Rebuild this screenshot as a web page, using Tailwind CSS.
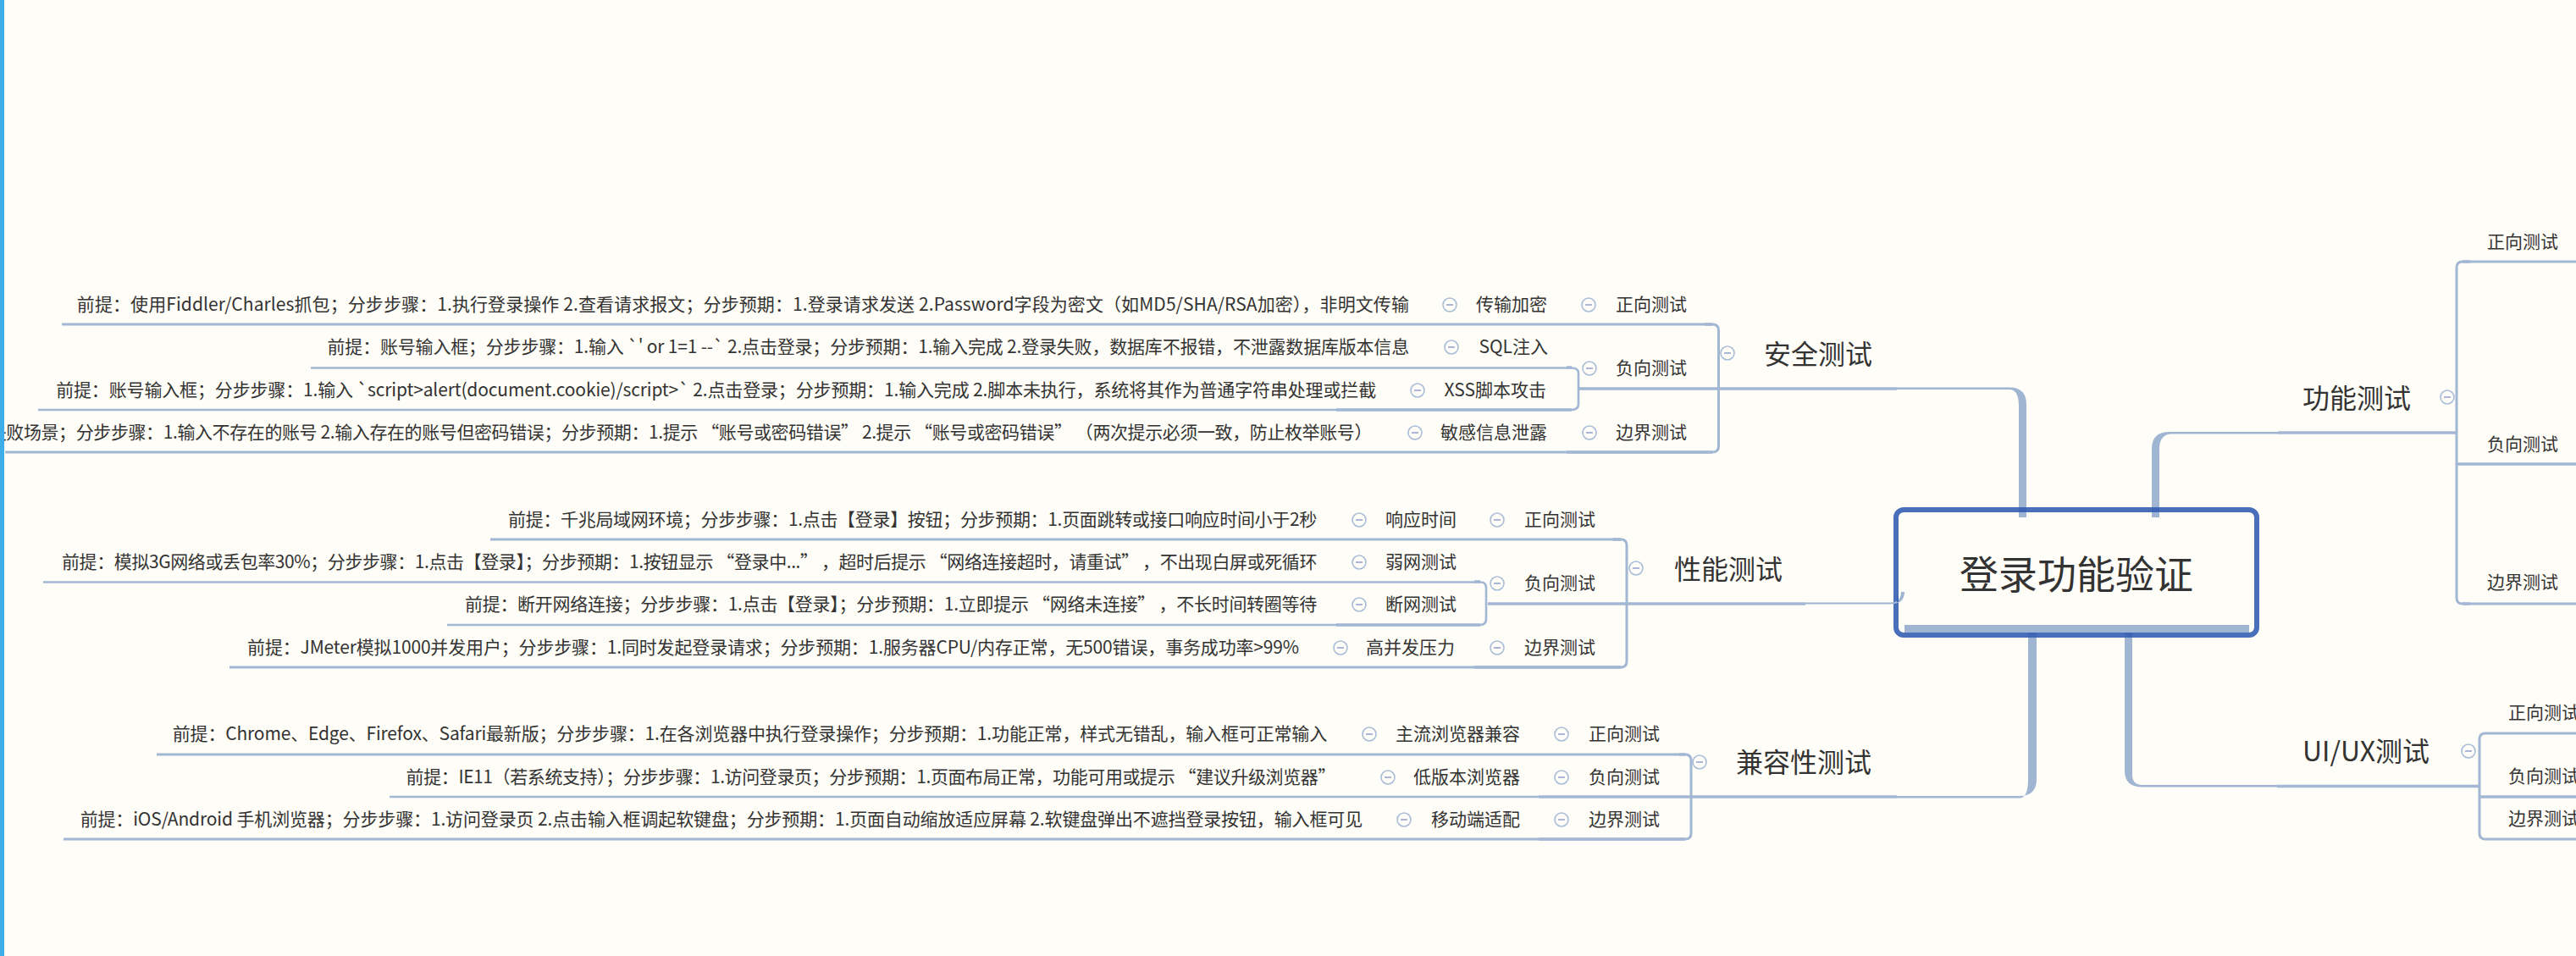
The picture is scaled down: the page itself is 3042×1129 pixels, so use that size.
<!DOCTYPE html>
<html lang="zh-CN">
<head>
    <meta charset="UTF-8">
    <title>登录功能验证</title>
    <script src="https://cdn.jsdelivr.net/npm/@tailwindcss/browser@4"></script>
</head>
<body class="bg-[#fffdf7]">
    <!-- mind map canvas: nodes sit at their diagram coordinates -->
    <div class="relative w-[3042px] h-[1129px] overflow-hidden bg-[#fffdf7] text-[#333] text-[21px] leading-[25px] whitespace-nowrap font-['Noto_Sans_CJK_SC','Liberation_Sans',sans-serif]">

        <!-- root topic -->
        <div class="absolute left-[2236px] top-[599px] w-[432px] h-[154px] border-[6px] border-[#4a6fba] rounded-[12px] flex items-center justify-center pb-[2px]">
            <span class="text-[46px] leading-[60px]">登录功能验证</span>
        </div>

        <svg class="absolute inset-0" width="3042" height="1129" fill="none" stroke="#a2b7d3" stroke-width="3">
            <defs>
                <g id="fold">
                    <circle r="8" fill="#fffdf7" stroke="#a9bdd9" stroke-width="1.6"></circle>
                    <path d="M-4 0H4" stroke="#a4aed4" stroke-width="1.8"></path>
                </g>
            </defs>

            <!-- hub bar and branches -->
            <g fill="#9fb5d1" stroke="none">
                <rect x="2249" y="738" width="407" height="9"></rect>
                <path d="M2240 457.5H2373Q2393 457.5 2393 478V611H2384V480Q2384 460 2373 460H2240Z"></path>
                <rect x="2541" y="530" width="9" height="81"></rect>
                <path d="M2541 530Q2541 510 2562 510H2690V512.5H2565Q2550 512.5 2550 530Z"></path>
                <path d="M2132 711.5H2232Q2245 711.5 2245 699H2249Q2249 713.5 2232 713.5H2132Z"></path>
                <path d="M2405 747V920Q2405 940 2385 940H2240V942.5H2385Q2395 942.5 2395 920V747Z"></path>
                <path d="M2518 747V915Q2518 927 2530 927H2689V929.5H2530Q2509 929.5 2509 910V747Z"></path>
            </g>
            <!-- where branches cross the root border -->
            <g fill="#3f65b6" stroke="none">
                <rect x="2384" y="599" width="9" height="6"></rect>
                <rect x="2541" y="599" width="9" height="6"></rect>
                <rect x="2395" y="747" width="10" height="6"></rect>
                <rect x="2509" y="747" width="9" height="6"></rect>
                <rect x="2240" y="703" width="2" height="8"></rect>
            </g>

            <!-- 安全测试 -->
            <path d="M73 383H2022Q2029.5 383 2029.5 390V527Q2029.5 534 2022 534H6"></path>
            <path d="M367 434.5H1856Q1864 434.5 1864 441V477Q1864 484 1856 484H45" stroke-width="2.6"></path>
            <path d="M2013 383H2022M1850 534H2022M1850 434H1856M1578 484H1856" stroke-width="3.6"></path>
            <path d="M1865 459H2240" stroke-width="3.6"></path>

            <!-- 性能测试 -->
            <path d="M579 637H1914Q1921 637 1921 644V781Q1921 788 1914 788H271"></path>
            <path d="M51 687.5H1748Q1755 687.5 1755 694V731Q1755 738 1748 738H528" stroke-width="2.6"></path>
            <path d="M1741 788H1914M1905 637H1914M1578 738H1748M1741 687H1748" stroke-width="3.6"></path>
            <path d="M1757 713H2132" stroke-width="3.6"></path>

            <!-- 兼容性测试 -->
            <path d="M185 891H1990Q1997 891 1997 898V984Q1997 991 1990 991H75"></path>
            <path d="M460 941H1817" stroke-width="2.6"></path>
            <path d="M1983 891H1990M1817 991H1990" stroke-width="3.6"></path>
            <path d="M1817 941H2240" stroke-width="3.6"></path>

            <!-- 功能测试 -->
            <path d="M3042 309H2908Q2901 309 2901 316V706Q2901 713 2908 713H3042"></path>
            <path d="M2690 511H2901M2901 548H3042M2908 309H2917M2908 713H2917" stroke-width="3.6"></path>

            <!-- UI/UX测试 -->
            <path d="M3042 866H2935Q2928 866 2928 873V984Q2928 991 2935 991H3042"></path>
            <path d="M2689 928.5H2928M2928 941H3042" stroke-width="3.6"></path>

            <!-- fold buttons -->
            <use href="#fold" x="1712" y="360"></use>
            <use href="#fold" x="1876" y="360"></use>
            <use href="#fold" x="1714" y="410"></use>
            <use href="#fold" x="1674" y="461"></use>
            <use href="#fold" x="1877" y="435"></use>
            <use href="#fold" x="1671" y="511"></use>
            <use href="#fold" x="1877" y="511"></use>
            <use href="#fold" x="2040" y="417"></use>

            <use href="#fold" x="1605" y="614"></use>
            <use href="#fold" x="1768" y="614"></use>
            <use href="#fold" x="1605" y="664"></use>
            <use href="#fold" x="1605" y="714"></use>
            <use href="#fold" x="1768" y="689"></use>
            <use href="#fold" x="1583" y="765"></use>
            <use href="#fold" x="1768" y="765"></use>
            <use href="#fold" x="1932" y="671"></use>

            <use href="#fold" x="1617" y="867"></use>
            <use href="#fold" x="1844" y="867"></use>
            <use href="#fold" x="1639" y="918"></use>
            <use href="#fold" x="1844" y="918"></use>
            <use href="#fold" x="1658" y="968"></use>
            <use href="#fold" x="1844" y="968"></use>
            <use href="#fold" x="2007" y="900"></use>

            <use href="#fold" x="2890" y="469"></use>
            <use href="#fold" x="2915" y="887"></use>
        </svg>

        <!-- 安全测试 nodes -->
        <div class="absolute right-[1378px] top-[346px] tracking-[0.09px]">前提：使用Fiddler/Charles抓包；分步步骤：1.执行登录操作 2.查看请求报文；分步预期：1.登录请求发送 2.Password字段为密文（如MD5/SHA/RSA加密），非明文传输</div>
        <div class="absolute right-[1215px] top-[346px]">传输加密</div>
        <div class="absolute right-[1050px] top-[346px]">正向测试</div>
        <div class="absolute right-[1378px] top-[396px] tracking-[-0.19px]">前提：账号输入框；分步步骤：1.输入 `' or 1=1 --` 2.点击登录；分步预期：1.输入完成 2.登录失败，数据库不报错，不泄露数据库版本信息</div>
        <div class="absolute right-[1214px] top-[396px]">SQL注入</div>
        <div class="absolute right-[1050px] top-[421px]">负向测试</div>
        <div class="absolute right-[1417px] top-[447px] tracking-[-0.15px]">前提：账号输入框；分步步骤：1.输入 `script&gt;alert(document.cookie)/script&gt;` 2.点击登录；分步预期：1.输入完成 2.脚本未执行，系统将其作为普通字符串处理或拦截</div>
        <div class="absolute right-[1216px] top-[447px]">XSS脚本攻击</div>
        <div class="absolute right-[1422px] top-[497px] tracking-[-0.4px]">前提：登录失败场景；分步步骤：1.输入不存在的账号 2.输入存在的账号但密码错误；分步预期：1.提示 “账号或密码错误” 2.提示 “账号或密码错误” （两次提示必须一致，防止枚举账号）</div>
        <div class="absolute right-[1215px] top-[497px]">敏感信息泄露</div>
        <div class="absolute right-[1050px] top-[497px]">边界测试</div>
        <div class="absolute left-[2083px] top-[396px] text-[32px] leading-[41px]">安全测试</div>

        <!-- 性能测试 nodes -->
        <div class="absolute right-[1487px] top-[600px] tracking-[-0.32px]">前提：千兆局域网环境；分步步骤：1.点击【登录】按钮；分步预期：1.页面跳转或接口响应时间小于2秒</div>
        <div class="absolute right-[1322px] top-[600px]">响应时间</div>
        <div class="absolute right-[1158px] top-[600px]">正向测试</div>
        <div class="absolute right-[1487px] top-[650px] tracking-[-0.41px]">前提：模拟3G网络或丢包率30%；分步步骤：1.点击【登录】；分步预期：1.按钮显示 “登录中...” ，超时后提示 “网络连接超时，请重试” ，不出现白屏或死循环</div>
        <div class="absolute right-[1322px] top-[650px]">弱网测试</div>
        <div class="absolute right-[1158px] top-[675px]">负向测试</div>
        <div class="absolute right-[1487px] top-[700px] tracking-[-0.28px]">前提：断开网络连接；分步步骤：1.点击【登录】；分步预期：1.立即提示 “网络未连接” ，不长时间转圈等待</div>
        <div class="absolute right-[1322px] top-[700px]">断网测试</div>
        <div class="absolute right-[1508px] top-[751px] tracking-[-0.16px]">前提：JMeter模拟1000并发用户；分步步骤：1.同时发起登录请求；分步预期：1.服务器CPU/内存正常，无500错误，事务成功率&gt;99%</div>
        <div class="absolute right-[1324px] top-[751px]">高并发压力</div>
        <div class="absolute right-[1158px] top-[751px]">边界测试</div>
        <div class="absolute left-[1977px] top-[650px] text-[32px] leading-[41px]">性能测试</div>

        <!-- 兼容性测试 nodes -->
        <div class="absolute right-[1475px] top-[853px] tracking-[-0.16px]">前提：Chrome、Edge、Firefox、Safari最新版；分步步骤：1.在各浏览器中执行登录操作；分步预期：1.功能正常，样式无错乱，输入框可正常输入</div>
        <div class="absolute right-[1247px] top-[853px]">主流浏览器兼容</div>
        <div class="absolute right-[1082px] top-[853px]">正向测试</div>
        <div class="absolute right-[1465px] top-[904px] tracking-[-0.4px]">前提：IE11（若系统支持）；分步步骤：1.访问登录页；分步预期：1.页面布局正常，功能可用或提示 “建议升级浏览器”</div>
        <div class="absolute right-[1247px] top-[904px]">低版本浏览器</div>
        <div class="absolute right-[1082px] top-[904px]">负向测试</div>
        <div class="absolute right-[1433px] top-[954px] tracking-[-0.14px]">前提：iOS/Android 手机浏览器；分步步骤：1.访问登录页 2.点击输入框调起软键盘；分步预期：1.页面自动缩放适应屏幕 2.软键盘弹出不遮挡登录按钮，输入框可见</div>
        <div class="absolute right-[1247px] top-[954px]">移动端适配</div>
        <div class="absolute right-[1082px] top-[954px]">边界测试</div>
        <div class="absolute left-[2050px] top-[878px] text-[32px] leading-[41px]">兼容性测试</div>

        <!-- 功能测试 nodes -->
        <div class="absolute left-[2719px] top-[448px] text-[32px] leading-[41px]">功能测试</div>
        <div class="absolute left-[2937px] top-[272px]">正向测试</div>
        <div class="absolute left-[2937px] top-[511px]">负向测试</div>
        <div class="absolute left-[2937px] top-[674px]">边界测试</div>

        <!-- UI/UX测试 nodes -->
        <div class="absolute left-[2719px] top-[865px] text-[32px] leading-[41px]">UI/UX测试</div>
        <div class="absolute left-[2962px] top-[828px]">正向测试</div>
        <div class="absolute left-[2962px] top-[903px]">负向测试</div>
        <div class="absolute left-[2962px] top-[953px]">边界测试</div>

        <!-- window edge -->
        <div class="absolute left-0 top-0 w-[5px] h-full bg-[#3daee9]"></div>
    </div>
</body>
</html>
